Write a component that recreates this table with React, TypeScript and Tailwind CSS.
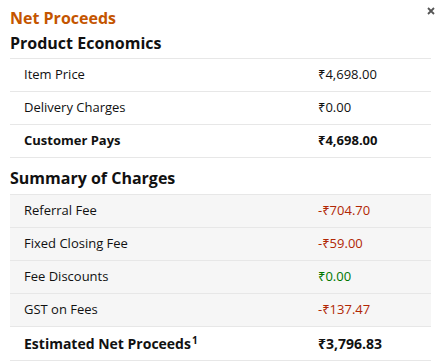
const productRows = [
  { label: "Item Price", value: "₹4,698.00" },
  { label: "Delivery Charges", value: "₹0.00" },
];

const chargeRows = [
  { label: "Referral Fee", value: "-₹704.70", tone: "text-[#b12704]" },
  { label: "Fixed Closing Fee", value: "-₹59.00", tone: "text-[#b12704]" },
  { label: "Fee Discounts", value: "₹0.00", tone: "text-[#007600]" },
  { label: "GST on Fees", value: "-₹137.47", tone: "text-[#b12704]" },
];

function Row({
  label,
  value,
  className = "",
  valueClass = "text-[#111]",
}: {
  label: React.ReactNode;
  value: string;
  className?: string;
  valueClass?: string;
}) {
  return (
    <div
      className={`grid grid-cols-[1fr_113px] items-center h-[33px] pl-[14px] border-b border-[#e7e7e7] text-[13px] ${className}`}
    >
      <span className="text-[#111]">{label}</span>
      <span className={valueClass}>{value}</span>
    </div>
  );
}

export default function App() {
  return (
    <div
      className="w-[441px] h-[362px] bg-white relative px-[10px] overflow-hidden"
      style={{ fontFamily: '"Open Sans", "Noto Sans", sans-serif' }}
    >
      {/* close button */}
      <button className="absolute right-[6px] top-[7px] text-[#555]" aria-label="Close">
        <svg width="8" height="8" viewBox="0 0 8 8" stroke="currentColor" strokeWidth="1.8">
          <path d="M1 1L7 7M7 1L1 7" />
        </svg>
      </button>

      <h2 className="text-[#c45500] text-[16px] font-bold leading-[20px] pt-[8px]">
        Net Proceeds
      </h2>
      <h3 className="text-[#111] text-[16px] font-bold leading-[20px] mt-[5px] pb-[5px] border-b border-[#e7e7e7]">
        Product Economics
      </h3>

      {productRows.map((r) => (
        <Row key={r.label} label={r.label} value={r.value} />
      ))}
      <Row label="Customer Pays" value="₹4,698.00" className="font-bold" />

      <h3 className="text-[#111] text-[16px] font-bold leading-[20px] pt-[10px] pb-[6px] border-b border-[#e7e7e7]">
        Summary of Charges
      </h3>

      {chargeRows.map((r) => (
        <Row
          key={r.label}
          label={r.label}
          value={r.value}
          valueClass={r.tone}
          className="bg-[#f6f6f6]"
        />
      ))}
      <div className="grid grid-cols-[1fr_113px] items-center h-[34px] pl-[14px] border-b border-[#e7e7e7] font-bold text-[14px] text-[#111]">
        <span>
          Estimated Net Proceeds<sup className="text-[10px] ml-[1px]">1</sup>
        </span>
        <span>₹3,796.83</span>
      </div>
    </div>
  );
}
